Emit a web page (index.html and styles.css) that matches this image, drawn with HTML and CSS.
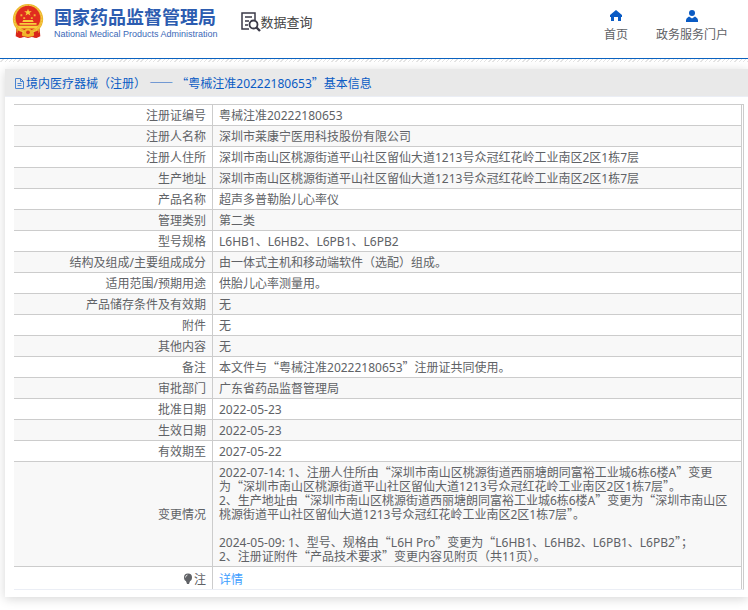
FILE: index.html
```html
<!DOCTYPE html>
<html lang="zh-CN">
<head>
<meta charset="utf-8">
<title>国家药品监督管理局 数据查询</title>
<link rel="stylesheet" href="styles.css">
</head>
<body>
<header class="site-header">
  <a class="brand" href="#">
    <svg class="emblem" viewBox="0 0 34 38" aria-hidden="true">
      <path d="M5 24h24l1 11-4 2-5-1-4 1-4-1-5 1-4-2z" fill="#d9261c"/>
      <path d="M5 28l6 3 6 2 6-2 6-3v3l-7 4-5 1-5-1-7-4z" fill="#f0b428"/>
      <circle cx="17" cy="17" r="16" fill="#edb52c"/>
      <circle cx="17" cy="17" r="14.500" fill="none" stroke="#f7d250" stroke-dasharray="2 1"/>
      <circle cx="17" cy="16" r="13" fill="#e02c1f"/>
      <path d="M17 6l1 2.700h3l-2.400 1.800 1 2.800-2.600-1.700-2.600 1.700 1-2.800L13 8.700h3z" fill="#f8cf3d"/>
      <path d="M9 12h2v2H9zM12 15h2v2h-2zM20 15h2v2h-2zM23 12h2v2h-2z" fill="#f3b233"/>
      <path d="M12 18h10l1 2H11zM8 21h18v2H8zM6 24h22l-2 3H8z" fill="#f8cf3d"/>
      <circle cx="17" cy="31" r="4" fill="#f2b62c"/>
      <circle cx="17" cy="31" r="2" fill="#dc3a1d"/>
      <path d="M6 29l5 2-1 6-4-2zM28 29l-5 2 1 6 4-2z" fill="#d9261c"/>
    </svg>
    <span class="brand-text">
      <span class="brand-name">国家药品监督管理局</span>
      <span class="brand-en">National Medical Products Administration</span>
    </span>
  </a>
  <a class="section" href="#">
    <svg class="section-icon" viewBox="0 0 20 20" fill="none" stroke="#3b3a48" aria-hidden="true">
      <path d="M14 8V1H1v16h7" stroke-width="1.500"/>
      <path d="M4 5h7M4 9h4M4 13h3" stroke-width="1.500"/>
      <circle cx="12.500" cy="12.500" r="4" stroke-width="1.800"/>
      <path d="M15.500 15.500l3.500 3.500" stroke-width="2.400"/>
    </svg>
    <span>数据查询</span>
  </a>
  <nav class="top-nav">
    <a class="nav-item" href="#">
      <svg class="nav-icon" viewBox="0 0 12 12" fill="#0a5bc4" aria-hidden="true"><path d="M6 0l6 5v2h-1v4H8V7H4v4H1V7H0V5z"/></svg>
      <span>首页</span>
    </a>
    <a class="nav-item" href="#">
      <svg class="nav-icon" viewBox="0 0 12 12" fill="#0a5bc4" aria-hidden="true"><circle cx="6" cy="3" r="3"/><path d="M0 12V10q0-2 3-3.500l3 2 3-2q3 1.500 3 3.500v2z"/></svg>
      <span>政务服务门户</span>
    </a>
  </nav>
</header>
<div class="hatch"></div>
<main class="card">
  <h1 class="card-title">
    <svg class="doc-icon" viewBox="0 0 12 12" fill="none" stroke="#4a84d2" aria-hidden="true"><path d="M1.500.500h5l3 3v7h-8zM6.500.500v3h3M3.500 5.500h4M3.500 7.500h4"/></svg>
    <span>境内医疗器械（注册） <span class="cjk">——</span> <span class="cjk">“</span>粤械注准20222180653<span class="cjk">”</span>基本信息</span>
  </h1>
  <div class="card-body">
    <table class="detail">
      <tbody>
        <tr><th scope="row">注册证编号</th><td>粤械注准20222180653</td></tr>
        <tr><th scope="row">注册人名称</th><td>深圳市莱康宁医用科技股份有限公司</td></tr>
        <tr><th scope="row">注册人住所</th><td>深圳市南山区桃源街道平山社区留仙大道1213号众冠红花岭工业南区2区1栋7层</td></tr>
        <tr><th scope="row">生产地址</th><td>深圳市南山区桃源街道平山社区留仙大道1213号众冠红花岭工业南区2区1栋7层</td></tr>
        <tr><th scope="row">产品名称</th><td>超声多普勒胎儿心率仪</td></tr>
        <tr><th scope="row">管理类别</th><td>第二类</td></tr>
        <tr><th scope="row">型号规格</th><td>L6HB1、L6HB2、L6PB1、L6PB2</td></tr>
        <tr><th scope="row">结构及组成/主要组成成分</th><td>由一体式主机和移动端软件（选配）组成。</td></tr>
        <tr><th scope="row">适用范围/预期用途</th><td>供胎儿心率测量用。</td></tr>
        <tr><th scope="row">产品储存条件及有效期</th><td>无</td></tr>
        <tr><th scope="row">附件</th><td>无</td></tr>
        <tr><th scope="row">其他内容</th><td>无</td></tr>
        <tr><th scope="row">备注</th><td>本文件与<span class="cjk">“</span>粤械注准20222180653<span class="cjk">”</span>注册证共同使用。</td></tr>
        <tr><th scope="row">审批部门</th><td>广东省药品监督管理局</td></tr>
        <tr><th scope="row">批准日期</th><td>2022-05-23</td></tr>
        <tr><th scope="row">生效日期</th><td>2022-05-23</td></tr>
        <tr><th scope="row">有效期至</th><td>2027-05-22</td></tr>
        <tr><th scope="row">变更情况</th><td>2022-07-14: 1、注册人住所由<span class="cjk">“</span>深圳市南山区桃源街道西丽塘朗同富裕工业城6栋6楼A<span class="cjk">”</span>变更<br>为<span class="cjk">“</span>深圳市南山区桃源街道平山社区留仙大道1213号众冠红花岭工业南区2区1栋7层<span class="cjk">”</span>。<br>2、生产地址由<span class="cjk">“</span>深圳市南山区桃源街道西丽塘朗同富裕工业城6栋6楼A<span class="cjk">”</span>变更为<span class="cjk">“</span>深圳市南山区桃源街道平山社区留仙大道1213号众冠红花岭工业南区2区1栋7层<span class="cjk">”</span>。<br><br>2024-05-09: 1、型号、规格由<span class="cjk">“</span>L6H Pro<span class="cjk">”</span>变更为<span class="cjk">“</span>L6HB1、L6HB2、L6PB1、L6PB2<span class="cjk">”</span>；<br>2、注册证附件<span class="cjk">“</span>产品技术要求<span class="cjk">”</span>变更内容见附页（共11页）。</td></tr>
        <tr class="note"><th scope="row"><svg class="bulb" viewBox="0 0 10 12" aria-hidden="true"><circle cx="5" cy="4.500" r="4" fill="#606266"/><path d="M3 8h4L6 11H4z" fill="#606266"/><path d="M2.500 4.500Q2.500 2.500 4.500 2" fill="none" stroke="#ddd"/></svg>注</th><td><a class="more" href="#">详情</a></td></tr>
      </tbody>
    </table>
  </div>
</main>
</body>
</html>
```
FILE: styles.css
```css
* {
  box-sizing: border-box;
}

body {
  margin: 0;
  background: #fff;
  color: #606266;
  font: 12px/14px "Noto Sans", "Noto Sans CJK SC", sans-serif;
}

a {
  color: inherit;
  text-decoration: none;
}

svg {
  flex: none;
}

/* Full-width quotes and dashes; the short line box keeps rows at 14px */
.cjk {
  font-family: "Noto Sans CJK SC", sans-serif;
  line-height: 10px;
}

.site-header {
  display: flex;
  align-items: flex-start;
  height: 59px;
  padding: 0 20px 0 11px;
  border-bottom: 1px solid #0a62c0;
}

.brand {
  display: flex;
  gap: 9px;
  padding-top: 3px;
}

.emblem {
  width: 34px;
  height: 36px;
}

.brand-text {
  display: flex;
  flex-direction: column;
  padding-top: 4px;
  white-space: nowrap;
}

.brand-name {
  color: #2c5cb0;
  font-size: 18px;
  font-weight: 700;
  line-height: 20px;
}

.brand-en {
  color: #3c69b8;
  font-family: "Liberation Sans", sans-serif;
  font-size: 9px;
  line-height: 14px;
}

.section {
  display: flex;
  align-items: center;
  margin-left: 23px;
  padding-top: 12px;
  color: #444;
  font-size: 13px;
  line-height: 20px;
}

.section-icon {
  width: 20px;
  height: 20px;
}

.top-nav {
  display: flex;
  gap: 28px;
  margin-left: auto;
  padding-top: 10px;
}

.nav-item {
  display: flex;
  flex-direction: column;
  align-items: center;
  gap: 6px;
}

.nav-icon {
  width: 12px;
  height: 12px;
}

.hatch {
  height: 3px;
  background: repeating-linear-gradient(135deg, #fff 0 2px, #e4e4e4 2px 3px);
}

.card {
  margin: 7px 0 12px 5px;
  background: #fff;
  box-shadow: 0 2px 10px rgba(0, 0, 0, 0.16);
}

.card-title {
  display: flex;
  align-items: center;
  height: 28px;
  margin: 0;
  padding: 2px 9px 0;
  border-bottom: 1px solid #ebeef5;
  background: #e9e9e9;
  color: #0a5bc4;
  font-size: 12px;
  font-weight: 400;
}

.doc-icon {
  width: 12px;
  height: 12px;
}

.card-body {
  padding: 7px 4px 7px 9px;
}

.detail {
  width: 100%;
  border-collapse: separate;
  border-spacing: 0;
  border-top: 1px solid #ccc;
  border-right: 1px solid #ccc;
  border-bottom: 1px solid #ebeef5;
  padding-right: 1px;
}

.detail th,
.detail td {
  padding: 4px 6px 2px;
  border-right: 1px solid #ccc;
  border-bottom: 1px solid #ccc;
  font-weight: 400;
}

.detail th {
  width: 199px;
  text-align: right;
}

.detail td {
  text-align: left;
}

.detail tr:nth-child(even) {
  background: #f8f8f8;
}

.detail .note th,
.detail .note td {
  padding: 6px 6px 2px;
  border-bottom: 0;
}

.bulb {
  width: 10px;
  height: 12px;
  margin-right: 1px;
  vertical-align: -1px;
}

.more {
  color: #409eff;
}
```
